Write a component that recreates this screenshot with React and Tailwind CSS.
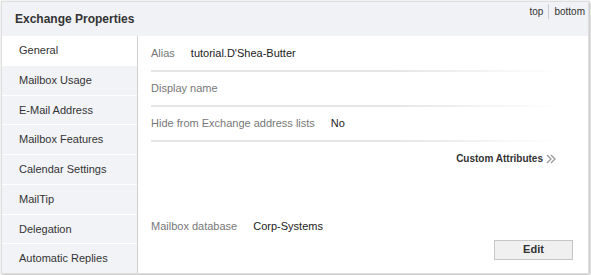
import React from 'react';

const tabs = [
    'General',
    'Mailbox Usage',
    'E-Mail Address',
    'Mailbox Features',
    'Calendar Settings',
    'MailTip',
    'Delegation',
    'Automatic Replies',
];

function Row({ label, value }) {
    return (
        <div className="h-[35px] flex flex-col">
            <div className="flex-1 flex items-center gap-4 text-[11px]">
                <span className="text-[#777]">{label}</span>
                {value && <span className="text-[#222]">{value}</span>}
            </div>
            <div className="h-[2px] w-[410px] bg-gradient-to-r from-[#e6e6e6] from-60% to-transparent"></div>
        </div>
    );
}

function Chevrons() {
    return (
        <svg width="11" height="10" viewBox="0 0 11 10" className="ml-[3px] mt-[1px]">
            <path d="M1 1 L5 5 L1 9" fill="none" stroke="#999" strokeWidth="1.3" />
            <path d="M5 1 L9 5 L5 9" fill="none" stroke="#999" strokeWidth="1.3" />
        </svg>
    );
}

export default function App() {
    return (
        <div className="w-[591px] h-[275px] bg-white pt-px pl-px font-['Liberation_Sans',Arial,sans-serif]">
            <div className="w-[588px] h-[273px] border border-[#dedede] shadow-[1px_1px_3px_rgba(0,0,0,0.3)] flex flex-col overflow-hidden">
                <div className="h-[34px] bg-[#f1f2f6] flex justify-between shrink-0">
                    <div className="pl-[13px] pt-[8px] text-[12px] font-bold text-[#333]">Exchange Properties</div>
                    <div className="flex items-start pt-[2px] pr-[3px] text-[10px] text-[#333]">
                        <span className="px-[5px] border-r border-[#c8ccd4] leading-[15px]">top</span>
                        <span className="pl-[5px] leading-[15px]">bottom</span>
                    </div>
                </div>
                <div className="flex-1 flex min-h-0">
                    <div className="w-[136px] bg-[#f2f3f7] flex flex-col border-r border-[#cfcfcf]">
                        {tabs.map((t, i) => (
                            <div
                                key={t}
                                className={`flex-1 flex items-center pl-[17px] text-[11px] text-[#333] ${i > 0 ? 'border-t border-white' : ''} ${i === 0 ? 'bg-white' : ''}`}
                            >
                                {t}
                            </div>
                        ))}
                    </div>
                    <div className="flex-1 pl-[13px] pr-[15px] pt-[1px] flex flex-col">
                        <Row label="Alias" value="tutorial.D'Shea-Butter" />
                        <Row label="Display name" />
                        <Row label="Hide from Exchange address lists" value="No" />
                        <div className="flex justify-end items-center pr-[16px] mt-[9px] text-[10px] font-bold text-[#333]">
                            <span>Custom Attributes</span>
                            <Chevrons />
                        </div>
                        <div className="flex items-center gap-4 text-[11px] mt-[52px]">
                            <span className="text-[#777]">Mailbox database</span>
                            <span className="text-[#222]">Corp-Systems</span>
                        </div>
                        <div className="flex justify-end mt-[5px]">
                            <button className="w-[79px] h-[20px] border border-[#c6c6c6] bg-[#f0f0f0] text-[11px] font-bold text-[#333]">Edit</button>
                        </div>
                    </div>
                </div>
            </div>
        </div>
    );
}
